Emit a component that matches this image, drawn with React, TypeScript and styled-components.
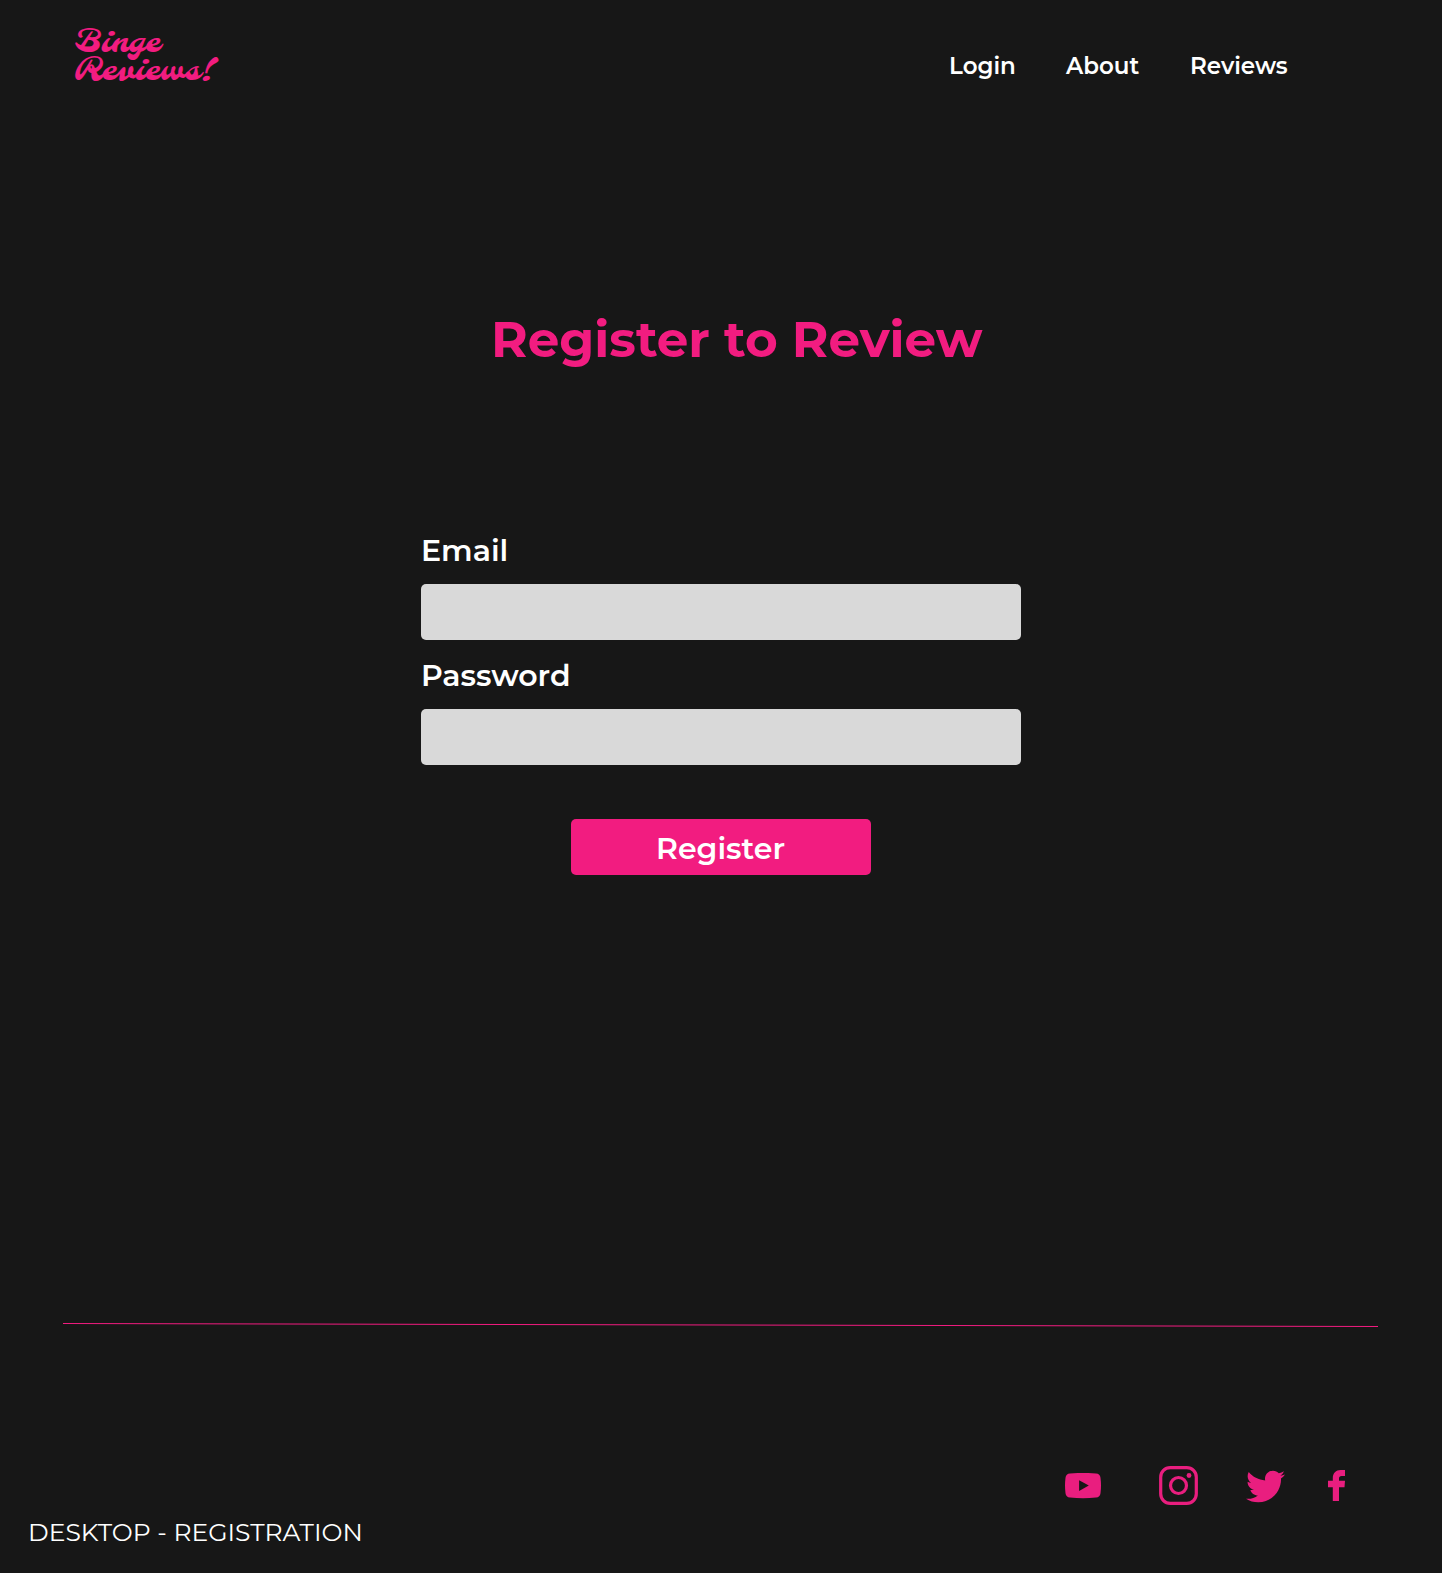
import React from "react";
import styled, { createGlobalStyle } from "styled-components";
import { FaTwitter } from "react-icons/fa";

const pink = "#f21c80";
const iconPink = "#e91e7f";

const GlobalStyle = createGlobalStyle`
  *, *::before, *::after { box-sizing: border-box; }
  body {
    margin: 0;
    background: #171717;
    color: #fff;
    font-family: Montserrat, Inter, "Liberation Sans", sans-serif;
  }
`;

const Page = styled.div`
  width: 1442px;
  height: 1573px;
  display: flex;
  flex-direction: column;
  overflow: hidden;
  background: #171717;
`;

const Header = styled.header`
  display: flex;
  justify-content: space-between;
  height: 140px;
  padding: 30px 154px 0 74px;
`;

const Logo = styled.a`
  display: flex;
  flex-direction: column;
  color: ${pink};
  font: normal 400 31px/28px Molle, "Liberation Serif", serif;
  text-decoration: none;
`;

const Nav = styled.nav`
  display: flex;
  gap: 50px;
  padding-top: 20px;
`;

const NavLink = styled.a<{ $width: number }>`
  width: ${(p) => p.$width}px;
  font-size: 23px;
  font-weight: 600;
  line-height: 32px;
  color: #fff;
  text-decoration: none;
`;

const Main = styled.main`
  display: flex;
  flex-direction: column;
  align-items: center;
  height: 1182px;
`;

const Title = styled.h1`
  width: 490px;
  margin: 170px 0 0 30px;
  color: ${pink};
  font-size: 50px;
  font-weight: 700;
  line-height: 60px;
  white-space: nowrap;
`;

const Form = styled.form`
  display: flex;
  flex-direction: column;
  width: 600px;
  margin-top: 159px;
`;

const Field = styled.label`
  display: flex;
  flex-direction: column;
  height: 125px;
  font-size: 30px;
  font-weight: 600;
  line-height: 40px;
`;

const LabelText = styled.span`
  height: 55px;
  padding-top: 2px;
`;

const Input = styled.input`
  width: 100%;
  height: 56px;
  padding: 0 16px;
  border: 0;
  border-radius: 5px;
  background: #d9d9d9;
  font: inherit;
  color: #171717;
`;

const Submit = styled.button`
  align-self: center;
  width: 300px;
  height: 56px;
  margin-top: 40px;
  padding: 4px 1px 0 0;
  border: 0;
  border-radius: 5px;
  background: ${pink};
  color: #fff;
  font-family: inherit;
  font-size: 30px;
  font-weight: 600;
  line-height: 40px;
`;

const Divider = styled.svg`
  display: block;
  width: 1315px;
  height: 6px;
  margin-left: 63px;
`;

const Footer = styled.footer`
  display: flex;
  flex-direction: column;
  padding-top: 138px;
`;

const Social = styled.div`
  display: flex;
  justify-content: flex-end;
  align-items: center;
  height: 39px;
  padding-right: 97px;
  color: ${iconPink};

  svg { display: block; }
`;

const SocialLink = styled.a<{ $gap?: number; $drop?: number }>`
  margin-left: ${(p) => p.$gap ?? 0}px;
  padding-top: ${(p) => p.$drop ?? 0}px;
  color: inherit;
`;

const Caption = styled.p`
  margin: 9px 0 0 28px;
  font-size: 25px;
  font-weight: 400;
  line-height: 36px;
`;

const YouTubeIcon = () => (
  <svg width="36" height="26" viewBox="0 0 36 26" fill="currentColor">
    <path fillRule="evenodd" d="M5 .5Q18-.7 31 .5Q35 .8 35.5 4.7Q36.5 12.7 35.5 20.2Q35 24.2 31 24.6Q18 25.8 5 24.6Q1 24.2 .5 20.2Q-.5 12.7 .5 4.7Q1 .8 5 .5ZM14.1 7.3V17.9L23.8 12.6Z" />
  </svg>
);

const InstagramIcon = () => (
  <svg width="39" height="39" viewBox="0 0 39 39" fill="none" stroke="currentColor" strokeWidth="3.2">
    <rect x="1.7" y="1.7" width="35.6" height="35.6" rx="9.5" />
    <circle cx="19.5" cy="19.5" r="8" />
    <circle cx="30" cy="9.5" r="2.4" fill="currentColor" stroke="none" />
  </svg>
);

const FacebookIcon = () => (
  <svg width="17" height="31" viewBox="0 0 17 31" fill="currentColor">
    <path d="M4.8 31V17.3H0V10.8H4.8V8C4.8 3 8 0 12.6 0H17V6H13.6C11.8 6 11 7 11 8.7V10.8H17L16.5 17.3H11V31Z" />
  </svg>
);

export default function App() {
  return (
    <Page>
      <GlobalStyle />
      <Header>
        <Logo>
          <span>Binge</span>
          <span>Reviews!</span>
        </Logo>
        <Nav>
          <NavLink $width={67}>Login</NavLink>
          <NavLink $width={74}>About</NavLink>
          <NavLink $width={98}>Reviews</NavLink>
        </Nav>
      </Header>
      <Main>
        <Title>Register to Review</Title>
        <Form>
          <Field>
            <LabelText>Email</LabelText>
            <Input type="email" />
          </Field>
          <Field>
            <LabelText>Password</LabelText>
            <Input type="password" />
          </Field>
          <Submit type="button">Register</Submit>
        </Form>
      </Main>
      <Divider viewBox="0 0 1315 6">
        <line x1="0" y1="1.5" x2="1315" y2="4.5" stroke={pink} strokeWidth="1" />
      </Divider>
      <Footer>
        <Social>
          <SocialLink aria-label="YouTube"><YouTubeIcon /></SocialLink>
          <SocialLink $gap={58} aria-label="Instagram"><InstagramIcon /></SocialLink>
          <SocialLink $gap={48} $drop={2} aria-label="Twitter"><FaTwitter size={39} /></SocialLink>
          <SocialLink $gap={43} aria-label="Facebook"><FacebookIcon /></SocialLink>
        </Social>
        <Caption>DESKTOP - REGISTRATION</Caption>
      </Footer>
    </Page>
  );
}
